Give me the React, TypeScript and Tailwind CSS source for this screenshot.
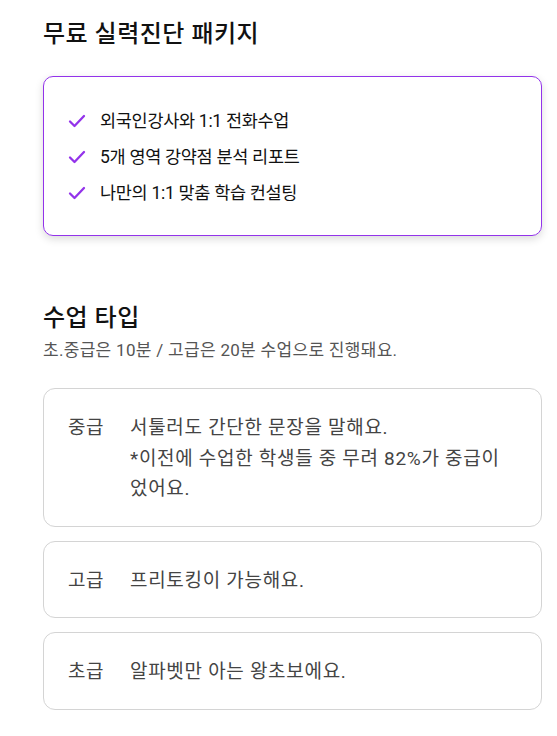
import React from "react";

const font = { fontFamily: 'Roboto, "Noto Sans CJK KR", sans-serif' };

function Check() {
  return (
    <svg width="18" height="14" viewBox="0 0 18 14" fill="none" className="shrink-0">
      <path d="M2 7.5 L6.5 12 L16 2" stroke="#9333ea" strokeWidth="2.3" strokeLinecap="round" strokeLinejoin="round" />
    </svg>
  );
}

const levels = [
  { label: "중급", text: "서툴러도 간단한 문장을 말해요.\n*이전에 수업한 학생들 중 무려 82%가 중급이었어요." },
  { label: "고급", text: "프리토킹이 가능해요." },
  { label: "초급", text: "알파벳만 아는 왕초보에요." },
];

export default function App() {
  return (
    <div className="bg-white w-[557px] min-h-[736px] pl-[43px] pr-[15px] text-[#111]" style={font}>
      <h2 className="pt-[18px] text-[24px] tracking-[0.5px] font-medium leading-[32px]">무료 실력진단 패키지</h2>
      <div className="mt-[26px] rounded-[10px] border border-[#9333ea] shadow-[0_3px_8px_rgba(0,0,0,0.15)] pl-[24px] pr-4 pt-[26px] pb-[24px] flex flex-col">
        {["외국인강사와 1:1 전화수업", "5개 영역 강약점 분석 리포트", "나만의 1:1 맞춤 학습 컨설팅"].map((t) => (
          <div key={t} className="flex items-center gap-[14px] text-[17.5px] tracking-[-0.3px] leading-[36px]">
            <Check />
            <span>{t}</span>
          </div>
        ))}
      </div>

      <h2 className="mt-[66px] text-[24px] tracking-[0.5px] font-medium leading-[32px]">수업 타입</h2>
      <p className="mt-[4px] text-[17px] tracking-[0.3px] leading-[24px] text-[#555]">초.중급은 10분 / 고급은 20분 수업으로 진행돼요.</p>

      <div className="mt-[26px] flex flex-col gap-[14px]">
        {levels.map((l) => (
          <div key={l.label} className="rounded-[12px] border border-[#d4d4d4] px-[24px] pt-[24px] pb-[21px] flex text-[19px] tracking-[0.7px] leading-[30.5px] text-[#444]">
            <span className="w-[62px] shrink-0 tracking-[0.4px]">{l.label}</span>
            <span className="whitespace-pre-line pr-[10px]">{l.text}</span>
          </div>
        ))}
      </div>
    </div>
  );
}
